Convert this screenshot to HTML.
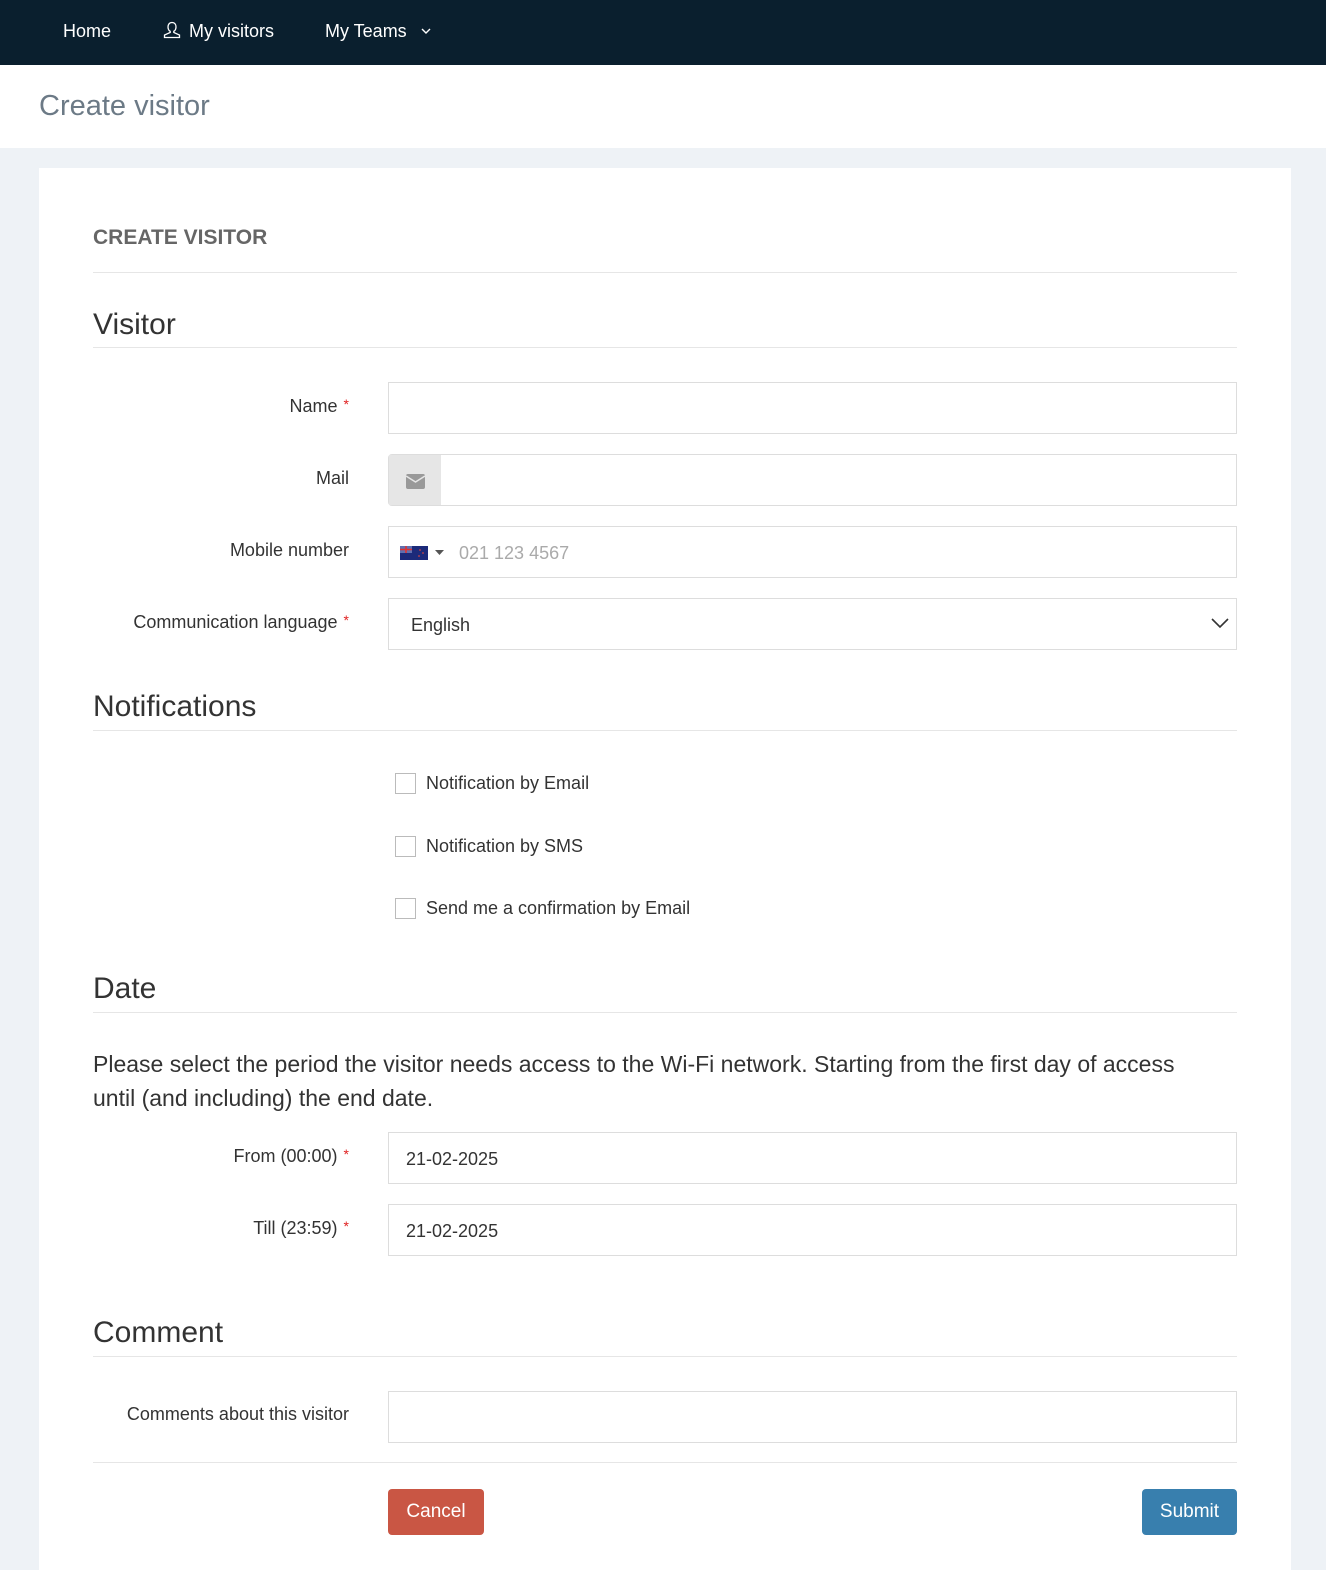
<!DOCTYPE html>
<html><head><meta charset="utf-8">
<style>
*{box-sizing:border-box;margin:0;padding:0}
body{width:1326px;height:1570px;overflow:hidden;background:#eef2f6;font-family:"Liberation Sans",Arial,sans-serif;color:#333;position:relative}
.nav{position:absolute;left:0;top:0;width:1326px;height:65px;background:#0a1f2e;color:#fff;font-size:18px}
.nav span{position:absolute;top:21px}
.hdr{position:absolute;left:0;top:65px;width:1326px;height:83px;background:#fff}
.hdr h1{position:absolute;left:39px;top:25px;font-size:29px;font-weight:normal;color:#6c7a86}
.card{position:absolute;left:39px;top:168px;width:1252px;height:1402px;background:#fff}
.a{position:absolute}
.line{position:absolute;left:93px;width:1144px;height:1px;background:#e6e6e6}
.h2{position:absolute;left:93px;font-size:30px;color:#333}
.lbl{position:absolute;right:977px;font-size:18px;color:#333;text-align:right;white-space:nowrap}
.star{color:#e02020;font-size:14px;vertical-align:top;margin-left:6px}
.inp{position:absolute;left:388px;width:849px;height:52px;border:1px solid #ddd;background:#fff;font-size:18px;color:#333}
.cb{position:absolute;left:395px;width:21px;height:21px;border:1px solid #bbb;background:#fff}
.cbt{position:absolute;left:426px;font-size:18px;color:#333}
.btn{position:absolute;top:1489px;height:46px;border-radius:4px;color:#fff;font-size:19px;text-align:center;line-height:46px}
</style></head><body>
<div class="nav">
<span style="left:63px">Home</span>
<svg class="a" style="left:162px;top:20px" width="20" height="20" viewBox="0 0 20 20" fill="none" stroke="#fff" stroke-width="1.3"><path d="M10 2.5c-2.6 0-4 2-4 4.5 0 2 1 3.6 2.2 4.3v1.2L2.5 15v2.5h15V15l-5.7-2.5v-1.2C13 10.6 14 9 14 7c0-2.5-1.4-4.5-4-4.5z"/></svg>
<span style="left:189px">My visitors</span>
<span style="left:325px">My Teams</span>
<svg class="a" style="left:420px;top:26px" width="12" height="10" viewBox="0 0 12 10" fill="none" stroke="#fff" stroke-width="1.4"><path d="M2 3l4 4 4-4"/></svg>
</div>
<div class="hdr"><h1>Create visitor</h1></div>
<div class="card"></div>

<div class="a" style="left:93px;top:226px;font-size:21px;font-weight:bold;color:#666">CREATE VISITOR</div>
<div class="line" style="top:272px"></div>
<div class="h2" style="top:308px">Visitor</div>
<div class="line" style="top:347px"></div>

<div class="lbl" style="top:396px">Name<span class="star">*</span></div>
<div class="inp" style="top:382px"></div>
<div class="lbl" style="top:468px">Mail</div>
<div class="inp" style="top:454px;border-radius:4px 0 0 4px"><div class="a" style="left:0;top:0;width:52px;height:50px;background:#e6e6e6"></div>
<svg class="a" style="left:17px;top:19px" width="19" height="15" viewBox="0 0 19 15"><rect x="0" y="0" width="19" height="15" rx="2" fill="#999"/><path d="M0 2l9.5 6 9.5-6" fill="none" stroke="#e6e6e6" stroke-width="1.5"/></svg></div>
<div class="lbl" style="top:540px">Mobile number</div>
<div class="inp" style="top:526px">
<svg class="a" style="left:11px;top:19px" width="28" height="14" viewBox="0 0 28 14"><rect width="28" height="14" fill="#1c2a7a"/><rect width="12" height="7" fill="#6070b0"/><path d="M0 3.5h12M6 0v7" stroke="#d33" stroke-width="1.6"/><circle cx="20" cy="4" r=".9" fill="#c44"/><circle cx="23" cy="7" r=".9" fill="#c44"/><circle cx="19" cy="10" r=".9" fill="#c44"/></svg>
<svg class="a" style="left:46px;top:23px" width="9" height="6" viewBox="0 0 9 6"><path d="M0 0h9L4.5 5z" fill="#555"/></svg>
<span class="a" style="left:70px;top:16px;color:#aaa">021 123 4567</span></div>
<div class="lbl" style="top:612px">Communication language<span class="star">*</span></div>
<div class="inp" style="top:598px"><span class="a" style="left:22px;top:16px">English</span>
<svg class="a" style="left:822px;top:18px" width="18" height="12" viewBox="0 0 18 12" fill="none" stroke="#333" stroke-width="1.6"><path d="M1 2l8 8 8-8"/></svg></div>

<div class="h2" style="top:690px">Notifications</div>
<div class="line" style="top:730px"></div>
<div class="cb" style="top:773px"></div><div class="cbt" style="top:773px">Notification by Email</div>
<div class="cb" style="top:836px"></div><div class="cbt" style="top:836px">Notification by SMS</div>
<div class="cb" style="top:898px"></div><div class="cbt" style="top:898px">Send me a confirmation by Email</div>

<div class="h2" style="top:972px">Date</div>
<div class="line" style="top:1012px"></div>
<div class="a" style="left:93px;top:1047px;width:1110px;font-size:23px;line-height:34px;color:#333">Please select the period the visitor needs access to the Wi-Fi network. Starting from the first day of access until (and including) the end date.</div>
<div class="lbl" style="top:1146px">From (00:00)<span class="star">*</span></div>
<div class="inp" style="top:1132px"><span class="a" style="left:17px;top:16px">21-02-2025</span></div>
<div class="lbl" style="top:1218px">Till (23:59)<span class="star">*</span></div>
<div class="inp" style="top:1204px"><span class="a" style="left:17px;top:16px">21-02-2025</span></div>

<div class="h2" style="top:1316px">Comment</div>
<div class="line" style="top:1356px"></div>
<div class="lbl" style="top:1404px">Comments about this visitor</div>
<div class="inp" style="top:1391px"></div>
<div class="line" style="top:1462px"></div>
<div class="btn" style="left:388px;width:96px;background:#c95644">Cancel</div>
<div class="btn" style="left:1142px;width:95px;background:#387fae">Submit</div>
</body></html>
